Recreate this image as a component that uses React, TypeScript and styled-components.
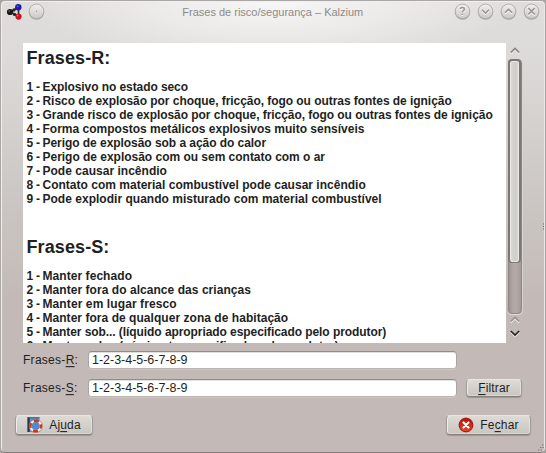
import React from "react";
import styled, { createGlobalStyle } from "styled-components";

const Global = createGlobalStyle`
  * { box-sizing: border-box; }
  body {
    margin: 0;
    overflow: hidden;
    background: #aaa5a3;
    font-family: "Liberation Sans", Arial, sans-serif;
    font-size: 12px;
    color: #221f1e;
  }
`;

const Window = styled.main`
  display: flex;
  flex-direction: column;
  width: 546px;
  height: 453px;
  position: relative;
  overflow: hidden;
  border: 1px solid #aaa6a5;
  border-bottom-color: #858180;
  border-radius: 5px;
  background:
    radial-gradient(ellipse 240px 70px at 273px 0, rgba(255, 255, 255, 0.75), rgba(255, 255, 255, 0.4) 50%, rgba(255, 255, 255, 0)),
    linear-gradient(#e0dedd 0, #dcdad8 60px, #cbc6c3 200px, #c3bab7 300px, #c3bab7 100%);
  box-shadow: inset 1px 1px 0 #f1f0ef, inset -1px 0 0 #e9e6e5;
`;

const TitleBar = styled.header`
  display: flex;
  align-items: center;
  height: 22px;
  padding: 0 4px 0 5px;
  flex: none;
`;

const Title = styled.h1`
  flex: 1;
  margin: 0 0 0 136.3px;
  font-size: 11px;
  line-height: 20px;
  font-weight: 400;
  color: #8d8a88;
  white-space: nowrap;
  transform: scaleY(1.05);
`;

const Controls = styled.div`
  display: flex;
  gap: 5px;
`;

const Icon = styled.svg`
  display: block;
  flex: none;
`;

const Body = styled.div`
  display: flex;
  margin: 20px 0 0 22px;
  height: 300px;
  flex: none;
`;

const Document = styled.article`
  width: 483px;
  height: 300px;
  padding: 5px 0 0 3.5px;
  background: #fff;
  overflow: hidden;
`;

const Heading = styled.h2<{ $second?: boolean }>`
  margin: ${(p) => (p.$second ? "31px" : "0")} 0 12px 0;
  font-size: 18px;
  line-height: 20px;
  height: 20px;
  letter-spacing: 0.1px;
`;

const Phrase = styled.p`
  display: flex;
  margin: 0;
  height: 14px;
  line-height: 14px;
  font-weight: 700;
  white-space: pre;
  transform: scaleY(1.07);
  transform-origin: 0 11px;
`;

const Code = styled.span`
  width: 9.5px;
`;

const Dash = styled.span`
  width: 6.5px;
`;

const Words = styled.span<{ $track: number }>`
  letter-spacing: ${(p) => p.$track}px;
`;

const ScrollBar = styled.div`
  display: flex;
  flex-direction: column;
  align-items: center;
  width: 17px;
  height: 300px;
`;

const Groove = styled.div`
  width: 14px;
  height: 255px;
  border: 1px solid #8e8784;
  border-radius: 4px;
  background: linear-gradient(90deg, #9c9491, #b2a9a6 35%, #b2a9a6 65%, #a29a97);
  box-shadow: 0 1px 0 #e1dddb, 1px 0 0 #d8d3d1;
`;

const Thumb = styled.div`
  width: 13px;
  height: 204px;
  margin: -1px 0 0 -1px;
  border: 2px solid #7d7772;
  border-bottom-width: 1px;
  border-radius: 4px;
  background: linear-gradient(90deg, #dedbd8, #d1cdc9 55%, #dad7d4);
  box-shadow: inset 0 0 0 1px #ebe9e7;
`;

const Form = styled.form`
  display: grid;
  grid-template-columns: 65px 369px 66px;
  grid-template-rows: 19px 19px;
  row-gap: 9px;
  margin: 8px 0 0 22px;
  flex: none;
`;

const Label = styled.label`
  grid-column: 1;
  line-height: 18px;
  letter-spacing: 0.28px;
  transform: scaleY(1.06);
  transform-origin: 0 13px;
`;

const Underlined = styled.span`
  text-decoration: underline;
  text-decoration-thickness: 1px;
  text-underline-offset: 2px;
  text-decoration-skip-ink: none;
`;

const Field = styled.input`
  grid-column: 2;
  width: 369px;
  height: 18px;
  padding: 0 0 0 3px;
  border: 1px solid #aaa5a2;
  border-top-color: #918c89;
  border-bottom-color: #bdb6b3;
  border-radius: 4px;
  outline: 0;
  background: #fff;
  color: #221f1e;
  font: 12.5px/16px "Liberation Sans", Arial, sans-serif;
  letter-spacing: -0.02px;
  box-shadow: inset 0 1px 0 #e2e0df, 0 1px 0 #cbc5c2;
`;

const Button = styled.button<{ $w: number; $h: number }>`
  display: flex;
  align-items: center;
  justify-content: center;
  gap: 6px;
  width: ${(p) => p.$w}px;
  height: ${(p) => p.$h}px;
  padding: 0;
  border: 1px solid #a29c98;
  border-top-color: #e9e7e4;
  border-bottom-color: #858079;
  border-radius: 4px;
  background: linear-gradient(#dedbd7, #c9c5bf);
  box-shadow: inset 1px 0 0 #efedea, inset -1px 0 0 #e4e1dd, inset 0 -1px 0 #dbd8d3, 0 1px 1px #9c9592;
  color: #221f1e;
  font: 12px/16px "Liberation Sans", Arial, sans-serif;
  letter-spacing: 0.15px;
`;

const ButtonText = styled.span`
  transform: scaleY(1.06);
  transform-origin: 0 13px;
`;

const FilterSlot = styled.div`
  display: flex;
  grid-column: 3;
  grid-row: 2;
  padding-left: 9px;
`;

const Footer = styled.footer`
  display: flex;
  justify-content: space-between;
  margin: 17px 14px 0 14px;
  flex: none;
`;

const Grip = styled.svg<{ $top: number }>`
  position: absolute;
  right: 0;
  top: ${(p) => p.$top}px;
`;

const Glyph = {
  help: "M6.3 6.2Q6.5 4.6 8.3 4.6Q10.3 4.6 10.3 6.3Q10.3 7.3 9.2 7.9Q8.4 8.4 8.4 9.4M8.4 10.8V12",
  down: "M5 6.8L8.5 10.2L12 6.8",
  up: "M5 9.8L8.5 6.4L12 9.8",
  close: "M5.3 5.1L11.7 11.5M11.7 5.1L5.3 11.5",
  dot: "M8.1 8.4H9",
};

function RoundButton({ kind }: { kind: keyof typeof Glyph }) {
  return (
    <Icon width="18" height="18" viewBox="0 0 18 18">
      <defs>
        <linearGradient id={`face-${kind}`} x1="0" y1="0" x2="0" y2="1">
          <stop offset="0" stopColor="#f1f0ef" />
          <stop offset="1" stopColor="#cbc8c5" />
        </linearGradient>
      </defs>
      <circle cx="8.5" cy="9" r="7.7" fill="#8d8986" opacity="0.65" />
      <circle cx="8.5" cy="8.4" r="7.3" fill={`url(#face-${kind})`} stroke="#aaa6a3" strokeWidth="0.8" />
      <path d={Glyph[kind]} transform="translate(0 1)" fill="none" stroke="#fff" strokeWidth="1.5" />
      <path d={Glyph[kind]} fill="none" stroke="#979390" strokeWidth="1.5" />
    </Icon>
  );
}

function Molecule() {
  return (
    <Icon width="17" height="18" viewBox="0 0 17 18">
      <path d="M4.5 9L12 4.5M4.5 9L12.5 13.5M12.5 5V13" stroke="#333" strokeWidth="1.7" />
      <circle cx="4" cy="9" r="3.1" fill="#1a1817" />
      <circle cx="8" cy="6.9" r="1.6" fill="#262322" />
      <circle cx="8.5" cy="11.4" r="1.6" fill="#262322" />
      <circle cx="12.3" cy="4.3" r="3.2" fill="#1d1bb0" />
      <circle cx="12.5" cy="13.6" r="3.1" fill="#c3141b" />
      <circle cx="3.2" cy="8" r="0.8" fill="#777" />
      <circle cx="11.6" cy="3.3" r="0.9" fill="#6a69de" />
      <circle cx="11.6" cy="12.6" r="0.9" fill="#f37a7c" />
    </Icon>
  );
}

function HelpIcon() {
  return (
    <Icon width="16" height="16" viewBox="0 0 16 16">
      <rect x="0.5" y="0.5" width="12" height="14.5" fill="#5c97c8" />
      <rect x="0.5" y="0.5" width="2.2" height="14.5" fill="#1f3550" />
      <rect x="0.5" y="0.3" width="12" height="1" fill="#2b567f" />
      <circle cx="8.7" cy="9" r="5.3" fill="#4a8fca" stroke="#f4eeee" strokeWidth="2.6" />
      <circle cx="8.7" cy="9" r="5.3" fill="none" stroke="#d8301f" strokeWidth="2.4" strokeDasharray="5.2 3.125" strokeDashoffset="2.6" />
      <circle cx="8.7" cy="9" r="6.7" fill="none" stroke="#b0473b" strokeWidth="0.5" />
    </Icon>
  );
}

function CloseIcon() {
  return (
    <Icon width="16" height="16" viewBox="0 0 16 16">
      <defs>
        <linearGradient id="red" x1="0" y1="0" x2="0" y2="1">
          <stop offset="0" stopColor="#b80f0c" />
          <stop offset="1" stopColor="#e2491f" />
        </linearGradient>
      </defs>
      <circle cx="8" cy="8" r="6.9" fill="url(#red)" stroke="#a80d0c" strokeWidth="1" />
      <path d="M5.5 5.5L10.5 10.5M10.5 5.5L5.5 10.5" stroke="#fff" strokeWidth="2.2" strokeLinecap="round" />
    </Icon>
  );
}

function Chevron({ down, color, height }: { down?: boolean; color: string; height: number }) {
  const d = down ? "M0.8 1.5L5 5.5L9.2 1.5" : "M0.8 5.5L5 1.5L9.2 5.5";
  return (
    <Icon width="10" height={height} viewBox={`0 ${(8 - height) / 2} 10 ${height}`}>
      <path d={d} transform="translate(0 1.2)" fill="none" stroke="#eeecea" strokeWidth="1.6" />
      <path d={d} fill="none" stroke={color} strokeWidth="1.7" />
    </Icon>
  );
}

const risks: [string, number][] = [
  ["Explosivo no estado seco", -0.08],
  ["Risco de explosão por choque, fricção, fogo ou outras fontes de ignição", -0.05],
  ["Grande risco de explosão por choque, fricção, fogo ou outras fontes de ignição", -0.05],
  ["Forma compostos metálicos explosivos muito sensíveis", 0.01],
  ["Perigo de explosão sob a ação do calor", -0.05],
  ["Perigo de explosão com ou sem contato com o ar", -0.02],
  ["Pode causar incêndio", 0.02],
  ["Contato com material combustível pode causar incêndio", 0.01],
  ["Pode explodir quando misturado com material combustível", 0.02],
];

const safety: [string, number][] = [
  ["Manter fechado", 0.06],
  ["Manter fora do alcance das crianças", 0.05],
  ["Manter em lugar fresco", 0.1],
  ["Manter fora de qualquer zona de habitação", 0.04],
  ["Manter sob... (líquido apropriado especificado pelo produtor)", -0.07],
  ["Manter sob... (gás inerte especificado pelo produtor)", -0.06],
];

function PhraseList({ items }: { items: [string, number][] }) {
  return (
    <>
      {items.map(([text, track], i) => (
        <Phrase key={text}>
          <Code>{i + 1}</Code>
          <Dash>-</Dash>
          <Words $track={track}>{text}</Words>
        </Phrase>
      ))}
    </>
  );
}

export default function App() {
  return (
    <>
      <Global />
      <Window>
        <TitleBar>
          <Molecule />
          <Icon width="5" height="1" />
          <RoundButton kind="dot" />
          <Title>Frases de risco/segurança – Kalzium</Title>
          <Controls>
            <RoundButton kind="help" />
            <RoundButton kind="down" />
            <RoundButton kind="up" />
            <RoundButton kind="close" />
          </Controls>
        </TitleBar>
        <Body>
          <Document>
            <Heading>Frases-R:</Heading>
            <PhraseList items={risks} />
            <Heading $second>Frases-S:</Heading>
            <PhraseList items={safety} />
          </Document>
          <ScrollBar>
            <Chevron color="#8a8683" height={16} />
            <Groove>
              <Thumb />
            </Groove>
            <Chevron color="#9a9390" height={12} />
            <Chevron color="#262322" height={15} down />
          </ScrollBar>
        </Body>
        <Form>
          <Label htmlFor="r">
            Frases-<Underlined>R</Underlined>:
          </Label>
          <Field id="r" defaultValue="1-2-3-4-5-6-7-8-9" />
          <Label htmlFor="s">
            Frases-<Underlined>S</Underlined>:
          </Label>
          <Field id="s" defaultValue="1-2-3-4-5-6-7-8-9" />
          <FilterSlot>
            <Button type="button" $w={56} $h={18}>
              <ButtonText>
                <Underlined>F</Underlined>iltrar
              </ButtonText>
            </Button>
          </FilterSlot>
        </Form>
        <Footer>
          <Button type="button" $w={78} $h={20}>
            <HelpIcon />
            <ButtonText>
              Aj<Underlined>u</Underlined>da
            </ButtonText>
          </Button>
          <Button type="button" $w={85} $h={20}>
            <CloseIcon />
            <ButtonText>
              Fe<Underlined>c</Underlined>har
            </ButtonText>
          </Button>
        </Footer>
        <Grip $top={222} width="3" height="9" viewBox="0 0 3 9">
          <path d="M1 1h1M1 3.5h1M1 6h1" stroke="#6f6a67" />
        </Grip>
        <Grip $top={443} width="8" height="8" viewBox="0 0 8 8">
          <path d="M5 1h1.3M3 3.5h1.3M5.5 3.5h1.3M1 6h1.3M3.5 6h1.3" stroke="#77716e" strokeWidth="1.2" />
        </Grip>
      </Window>
    </>
  );
}
